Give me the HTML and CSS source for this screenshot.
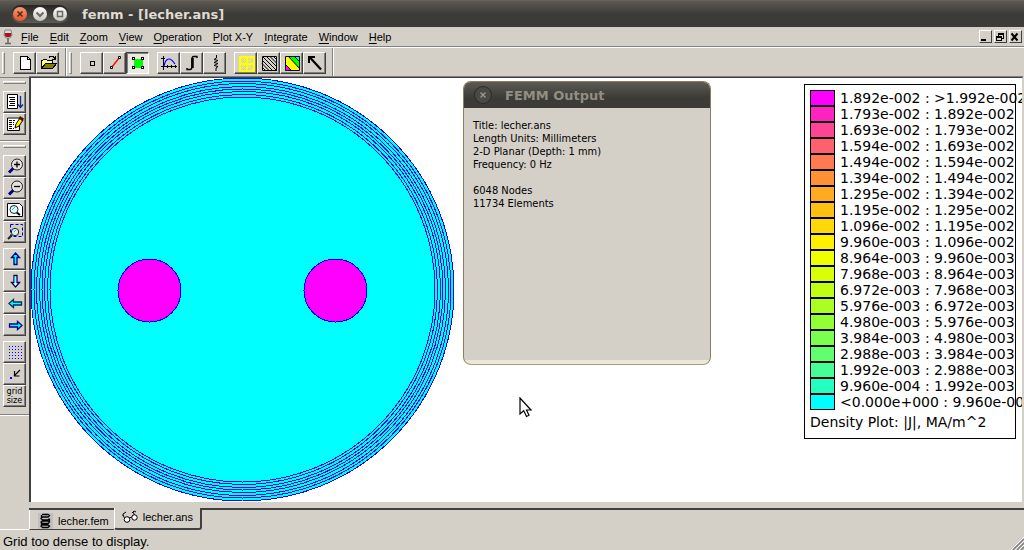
FILE: index.html
```html
<!DOCTYPE html>
<html lang="en">
<head>
<meta charset="utf-8">
<title>femm - [lecher.ans]</title>
<link rel="stylesheet" href="styles.css">
</head>
<body>
<header class="titlebar">
  <div class="window-buttons">
    <button class="orb orb-close" aria-label="Close"><svg width="14" height="14" viewBox="0 0 14 14"><path d="M4.5 4.5l5 5M9.5 4.5l-5 5" stroke="#5a2a18" stroke-width="1.6"/></svg></button>
    <button class="orb" aria-label="Minimize"><svg width="14" height="14" viewBox="0 0 14 14"><path d="M3.5 5.5L7 9l3.500-3.500" fill="none" stroke="#6a6862" stroke-width="2"/></svg></button>
    <button class="orb" aria-label="Maximize"><svg width="14" height="14" viewBox="0 0 14 14"><rect x="4.500" y="4.500" width="5" height="5" fill="none" stroke="#6a6862" stroke-width="1.500"/></svg></button>
  </div>
  <h1 class="title">femm - [lecher.ans]</h1>
</header>

<nav class="menubar">
  <svg class="glass" width="10" height="16" viewBox="0 0 10 16"><path d="M2 1h6l1 5-2 3H3L1 6z" fill="#d8d8d8" stroke="#888"/><path d="M2 4h6l.5 2L7 8H3L1.500 6z" fill="#b01020"/><path d="M5 9v5M2 14.500h6" stroke="#666" stroke-width="1.500"/></svg>
  <button class="menu"><u>F</u>ile</button>
  <button class="menu"><u>E</u>dit</button>
  <button class="menu"><u>Z</u>oom</button>
  <button class="menu"><u>V</u>iew</button>
  <button class="menu"><u>O</u>peration</button>
  <button class="menu"><u>P</u>lot X-Y</button>
  <button class="menu"><u>I</u>ntegrate</button>
  <button class="menu"><u>W</u>indow</button>
  <button class="menu"><u>H</u>elp</button>
  <div class="mdi-buttons">
    <button class="mdi" aria-label="Minimize document"><svg width="10" height="10" viewBox="0 0 10 10"><path d="M1 8h5" stroke="#000" stroke-width="2"/></svg></button>
    <button class="mdi" aria-label="Restore document"><svg width="10" height="10" viewBox="0 0 10 10" shape-rendering="crispEdges"><path d="M3 1h6v2H3zM1 4h6v2H1z" fill="#000"/><path d="M8.500 2v4.500H7M3.500 2v2M1.500 5v3.500h5V5" fill="none" stroke="#000"/></svg></button>
    <button class="mdi" aria-label="Close document"><svg width="10" height="10" viewBox="0 0 10 10"><path d="M1.500 1.500l6 7M7.500 1.500l-6 7" stroke="#000" stroke-width="2"/></svg></button>
  </div>
</nav>

<div class="toolbar">
  <div class="band">
    <span class="grip"></span>
    <div class="group">
      <button class="tool" aria-label="New"><svg width="18" height="18" viewBox="0 0 18 18" shape-rendering="crispEdges"><path d="M4.500 2.500h7l3 3v10h-10z" fill="#fff" stroke="#000"/><path d="M11.500 2.500v3h3" fill="none" stroke="#000"/></svg></button>
      <button class="tool" aria-label="Open"><svg width="18" height="18" viewBox="0 0 18 18" shape-rendering="crispEdges"><path d="M2.500 14V6.500h1l1-1h3l1 1h5V9" fill="#ffff80" stroke="#000"/><path d="M2.500 14.500l4-5h11l-4 5z" fill="#808000" stroke="#000"/><path d="M10 3.500l1-1h3l2 2M16.500 2v3.500H13" fill="none" stroke="#000"/></svg></button>
    </div>
  </div>
  <div class="band">
    <span class="grip"></span>
    <div class="group">
      <button class="tool" aria-label="Point mode"><svg width="18" height="18" viewBox="0 0 18 18"><rect x="7.500" y="7.500" width="4" height="4" fill="none" stroke="#000"/></svg></button>
      <button class="tool" aria-label="Contour mode"><svg width="18" height="18" viewBox="0 0 18 18"><path d="M6 13l7-9" stroke="#f00" stroke-width="1.300"/><path d="M4.500 12.500h2v2h-2zM12.500 2.500h2v2h-2z" fill="#fff" stroke="#000"/></svg></button>
      <button class="tool pressed" aria-label="Block mode" aria-pressed="true"><svg width="18" height="18" viewBox="0 0 18 18" shape-rendering="crispEdges"><path d="M5 5h9v9H5z" fill="#0f0"/><path d="M3.500 3.500h2v2h-2zM12.500 3.500h2v2h-2zM3.500 12.500h2v2h-2zM12.500 12.500h2v2h-2z" fill="#fff" stroke="#000"/></svg></button>
    </div>
    <div class="group">
      <button class="tool" aria-label="Plot"><svg width="18" height="18" viewBox="0 0 18 18"><path d="M3.500 2v14M1 12.500h16M1 4.500h4M7.500 11v3M11.500 11v3M15.500 11v3" stroke="#000" shape-rendering="crispEdges"/><path d="M4 12c1-5 3-7 5-7s4 2 6 5" fill="none" stroke="#00f" stroke-width="1.200"/></svg></button>
      <button class="tool" aria-label="Integrate"><svg width="18" height="18" viewBox="0 0 18 18"><path d="M14 4V2.500h-3.500c-1 0-1.500 1-1.500 3v7c0 2-1 3-2 3H4V14" fill="none" stroke="#000" stroke-width="1.400"/><path d="M9.500 4v10" stroke="#000" stroke-width="2.500"/></svg></button>
      <button class="tool" aria-label="Circuit"><svg width="18" height="18" viewBox="0 0 18 18"><path d="M10.500 1v3L8 5.500l4 1-4 2 4 1-4 2 4 1-2 1.500v3" fill="none" stroke="#000"/></svg></button>
    </div>
    <div class="group">
      <button class="tool" aria-label="Mesh"><svg width="18" height="18" viewBox="0 0 18 18" shape-rendering="crispEdges"><path d="M2.500 2.500h14v14h-14zM9.500 2v15M2 9.500h15" fill="none" stroke="#ff0" stroke-width="2"/><path d="M3 3l6 6M16 3l-6 6M3 16l6-6M16 16l-6-6M4 9l5-5M10 4l5 5M4 10l5 5M15 10l-5 5" stroke="#ff0"/></svg></button>
      <button class="tool" aria-label="Contour plot"><svg width="18" height="18" viewBox="0 0 18 18"><path d="M2.500 2.500h14v14h-14zM2 13l4 4M2 9.500l7 7M2 6l11 11M3 3l14 14M6 2l11 11M9.500 2l7 7M13 2l4 4" fill="none" stroke="#000"/></svg></button>
      <button class="tool" aria-label="Density plot"><svg width="18" height="18" viewBox="0 0 18 18"><path d="M2 2h15v15H2z" fill="#ff0"/><path d="M5 2h7l5 5v8z" fill="#0f0"/><path d="M11 2h6v6z" fill="#0ff"/><path d="M2 10l7 7H2z" fill="#f0f"/><path d="M5 2l12 13M2 10l7 7M11 2l6 6" stroke="#000"/><path d="M2.500 2.500h14v14h-14z" fill="none" stroke="#000"/></svg></button>
      <button class="tool" aria-label="Vector plot"><svg width="18" height="18" viewBox="0 0 18 18"><path d="M4 3.500l11 12" stroke="#000" stroke-width="2.200"/><path d="M3 9V3h6" fill="none" stroke="#000" stroke-width="2"/></svg></button>
    </div>
  </div>
</div>

<main class="workspace">
  <aside class="sidebar">
    <div class="side-band">
      <span class="side-grip"></span>
      <div class="stack">
        <button class="tool" aria-label="Output window"><svg width="18" height="18" viewBox="0 0 18 18"><path d="M1.500 1.500h10v14h-10z" fill="#fff" stroke="#000"/><path d="M3 4.500h6M4 6.500h5M3 8.500h6M4 10.500h5M3 12.500h6" stroke="#000"/><path d="M14.500 3v11M12 11.500l2.500 3 2.500-3" fill="none" stroke="#003090" stroke-width="1.300"/></svg></button>
        <button class="tool" aria-label="Edit notes"><svg width="18" height="18" viewBox="0 0 18 18"><path d="M1.500 2.500h11v13h-11z" fill="#fff"/><path d="M1.500 15.500V3h12v12.500z" fill="none" stroke="#000"/><path d="M3 5.500h6M3 7.500h5M3 9.500h5M3 11.500h4M3 13.500h5" stroke="#000" stroke-dasharray="3 1"/><path d="M9 13l1-4 4-6 3 2-4 6z" fill="#ff0" stroke="#000"/><path d="M13 3.500l1-2 3.500 2-1 2.500z" fill="#800000" stroke="#000" stroke-width=".5"/></svg></button>
      </div>
    </div>
    <div class="side-band zooms">
      <span class="side-grip"></span>
      <div class="stack">
        <button class="tool" aria-label="Zoom in"><svg width="18" height="18" viewBox="0 0 18 18"><path d="M3 15.500l5-5" stroke="#000080" stroke-width="3"/><circle cx="11" cy="7.500" r="5.500" fill="#e4e2de" stroke="#222"/><path d="M8 7.500h6M11 4.500v6" stroke="#000" stroke-width="1.300"/></svg></button>
        <button class="tool" aria-label="Zoom out"><svg width="18" height="18" viewBox="0 0 18 18"><path d="M3 15.500l5-5" stroke="#000080" stroke-width="3"/><circle cx="11" cy="7.500" r="5.500" fill="#e4e2de" stroke="#222"/><path d="M8 7.500h6" stroke="#000" stroke-width="1.300"/></svg></button>
        <button class="tool" aria-label="Zoom to page"><svg width="18" height="18" viewBox="0 0 18 18"><path d="M1.500 2.500h12l3 3v10h-15z" fill="#fff" stroke="#000"/><path d="M10 11l4 3" stroke="#000" stroke-width="2"/><circle cx="8" cy="8.500" r="4" fill="#dff" stroke="#222"/><path d="M6 9l3-3" stroke="#0cc"/></svg></button>
        <button class="tool" aria-label="Zoom window"><svg width="18" height="18" viewBox="0 0 18 18"><path d="M4.500 1.500h12v12h-12z" fill="none" stroke="#0000a0" stroke-dasharray="3 2"/><path d="M2 16l4-4" stroke="#222" stroke-width="2"/><circle cx="9" cy="9" r="3.700" fill="#dee" stroke="#222"/><path d="M8 9l2-2" stroke="#0cc"/></svg></button>
      </div>
      <div class="stack">
        <button class="tool" aria-label="Pan up"><svg width="18" height="18" viewBox="0 0 18 18"><path d="M9.500 3l4 4.500h-2.500v7H8v-7H5.500z" fill="#0ff" stroke="#000080" stroke-width="1.300"/></svg></button>
        <button class="tool" aria-label="Pan down"><svg width="18" height="18" viewBox="0 0 18 18"><path d="M9.500 15l4-4.500h-2.500v-7H8v7H5.500z" fill="#fff" stroke="#000060" stroke-width="1.300"/><path d="M9 4v7" stroke="#0ff"/></svg></button>
        <button class="tool" aria-label="Pan left"><svg width="18" height="18" viewBox="0 0 18 18"><path d="M3 9.500l4.500-4v2.500h8v3h-8v2.500z" fill="#0ff" stroke="#003060" stroke-width="1.300"/></svg></button>
        <button class="tool" aria-label="Pan right"><svg width="18" height="18" viewBox="0 0 18 18"><path d="M16 9.500l-4.500-4v2.500h-8v3h8v2.500z" fill="#0ff" stroke="#000090" stroke-width="1.300"/></svg></button>
      </div>
      <div class="stack">
        <button class="tool" aria-label="Show grid"><svg width="18" height="18" viewBox="0 0 18 18" shape-rendering="crispEdges"><path d="M3 3.500h13M3 6.500h13M3 9.500h13M3 12.500h13M3 15.500h13" stroke="#00f" stroke-dasharray="1 2"/></svg></button>
        <button class="tool" aria-label="Snap to grid"><svg width="18" height="18" viewBox="0 0 18 18"><path d="M14 5l-6 6M8.500 6v5h5" fill="none" stroke="#000" stroke-width="1.200"/><path d="M4 12h2v2H4z" fill="#00f"/></svg></button>
        <button class="tool grid-size">grid<br>size</button>
      </div>
    </div>
  </aside>

  <div class="document">
    <div class="canvas">
      <svg class="geometry" width="424" height="424" viewBox="0 0 424 424" shape-rendering="crispEdges">
        <g fill="#0ff" stroke="#00f">
          <circle cx="211.500" cy="211.500" r="211.500"/>
          <circle cx="211.500" cy="211.500" r="208.500"/>
          <circle cx="211.500" cy="211.500" r="206"/>
          <circle cx="211.500" cy="211.500" r="203"/>
          <circle cx="211.500" cy="211.500" r="200.500"/>
          <circle cx="211.500" cy="211.500" r="198"/>
          <circle cx="211.500" cy="211.500" r="195"/>
          <circle cx="211.500" cy="211.500" r="192.500"/>
        </g>
        <g fill="#f0f" stroke="#00f">
          <circle cx="118.500" cy="212.500" r="31.500"/>
          <circle cx="304.500" cy="212.500" r="31.500"/>
        </g>
      </svg>

      <section class="output">
        <header class="output-title">
          <button class="output-close" aria-label="Close output"><svg width="16" height="16" viewBox="0 0 16 16"><path d="M5.500 5.500l5 5M10.500 5.500l-5 5" stroke="#a09c90" stroke-width="1.200"/></svg></button>
          <h2 class="title">FEMM Output</h2>
        </header>
        <div class="output-text">
          <p>Title: lecher.ans<br>Length Units: Millimeters<br>2-D Planar (Depth: 1 mm)<br>Frequency: 0 Hz</p>
          <p>6048 Nodes<br>11734 Elements</p>
        </div>
      </section>

      <section class="legend">
        <ul class="scale">
          <li><i style="background:#ff00ff"></i>1.892e-002 : &gt;1.992e-002</li>
          <li><i style="background:#ff24c2"></i>1.793e-002 : 1.892e-002</li>
          <li><i style="background:#ff4495"></i>1.693e-002 : 1.793e-002</li>
          <li><i style="background:#ff606e"></i>1.594e-002 : 1.693e-002</li>
          <li><i style="background:#ff7a4e"></i>1.494e-002 : 1.594e-002</li>
          <li><i style="background:#ff9234"></i>1.394e-002 : 1.494e-002</li>
          <li><i style="background:#ffaa20"></i>1.295e-002 : 1.394e-002</li>
          <li><i style="background:#ffc012"></i>1.195e-002 : 1.295e-002</li>
          <li><i style="background:#ffd808"></i>1.096e-002 : 1.195e-002</li>
          <li><i style="background:#fff000"></i>9.960e-003 : 1.096e-002</li>
          <li><i style="background:#f0ff00"></i>8.964e-003 : 9.960e-003</li>
          <li><i style="background:#d8ff08"></i>7.968e-003 : 8.964e-003</li>
          <li><i style="background:#c0ff12"></i>6.972e-003 : 7.968e-003</li>
          <li><i style="background:#aaff20"></i>5.976e-003 : 6.972e-003</li>
          <li><i style="background:#92ff34"></i>4.980e-003 : 5.976e-003</li>
          <li><i style="background:#7aff4e"></i>3.984e-003 : 4.980e-003</li>
          <li><i style="background:#60ff6e"></i>2.988e-003 : 3.984e-003</li>
          <li><i style="background:#44ff95"></i>1.992e-003 : 2.988e-003</li>
          <li><i style="background:#24ffc2"></i>9.960e-004 : 1.992e-003</li>
          <li><i style="background:#00ffff"></i>&lt;0.000e+000 : 9.960e-004</li>
        </ul>
        <p class="caption">Density Plot: |J|, MA/m^2</p>
      </section>

      <svg class="pointer" width="14" height="21" viewBox="0 0 14 21"><path d="M1 1v16l3.700-3.300L7.500 19.500l2.500-1.200-2.500-5.300H12z" fill="#fff" stroke="#000" stroke-width="1.200"/></svg>
    </div>

    <div class="tabs">
      <button class="tab"><svg width="15" height="16" viewBox="0 0 15 16"><path d="M0 0h15v16H0z" fill="#c0c0c0"/><path d="M4 1.500h6l1.500 1-1.500 1.500H4.500L3 5.500 4.500 7H10l1.500-1.500M3 9l1.500 1.500H10L11.500 9 10 8H4.500zM3 13l1.500 1.500H10l1.500-1.500-1.500-1H4.500zM3.500 2v3M11.500 6v3M3.500 9v4" fill="none" stroke="#000" stroke-width="1.300"/></svg>lecher.fem</button>
      <button class="tab current"><svg width="16" height="14" viewBox="0 0 16 14"><path d="M1 6V4l3-2M10 3l2-2 2 1M7 8l3-1M1 5l2 4M11 2l2 4" fill="none" stroke="#000"/><circle cx="5" cy="9.500" r="2.800" fill="#fff" stroke="#000"/><circle cx="12.500" cy="7.500" r="2.700" fill="#fff" stroke="#000"/></svg>lecher.ans</button>
    </div>
  </div>
</main>

<footer class="status">
  <span>Grid too dense to display.</span>
  <svg class="resize" width="13" height="13" viewBox="0 0 13 13"><path d="M0 13L13 0M4 13l9-9M8 13l5-5" stroke="#fff"/><path d="M2 13L13 2M6 13l7-7M10 13l3-3" stroke="#808080" stroke-width="1.500"/></svg>
</footer>
</body>
</html>
```
FILE: styles.css
```css
* {
  box-sizing: border-box;
}

body {
  display: flex;
  flex-direction: column;
  height: 100vh;
  margin: 0;
  overflow: hidden;
  background: #d4d0c8;
  color: #000;
  font: 11px "Liberation Sans", Arial, sans-serif;
}

button {
  margin: 0;
  padding: 0;
  border: 0;
  background: none;
  color: inherit;
  font: inherit;
}

svg {
  display: block;
  flex: none;
}

p {
  margin: 0;
}

.titlebar {
  display: flex;
  align-items: center;
  gap: 13px;
  height: 27px;
  padding-left: 11px;
  border-top: 1px solid #6b6150;
  background: linear-gradient(#5c5a54, #3c3b37 50%);
}

.window-buttons {
  display: flex;
  align-items: center;
  gap: 6px;
  height: 18px;
  padding: 0 2px;
  border-radius: 9px;
  background: linear-gradient(#25241f, #5c5a54);
}

.orb {
  border-radius: 50%;
  background: linear-gradient(#fff, #c8c4bc);
}

.orb-close {
  background: linear-gradient(#f79a78, #e5562a);
}

.title {
  margin: 0;
  color: #dfdbd2;
  font: bold 13px "DejaVu Sans", sans-serif;
}

.menubar {
  display: flex;
  align-items: center;
  gap: 11px;
  height: 20px;
  padding: 0 2px 0 3px;
  border-bottom: 1px solid #808080;
}

.glass {
  margin-right: -3px;
}

.menu u {
  text-underline-offset: 2px;
}

.mdi-buttons {
  display: flex;
  gap: 2px;
  margin-left: auto;
}

.mdi {
  width: 13px;
  height: 13px;
  border: 1px solid;
  border-color: #fff #404040 #404040 #fff;
}

.toolbar {
  display: flex;
  height: 30px;
  border-top: 1px solid #fff;
}

.band {
  display: flex;
  align-items: center;
  gap: 8px;
  padding: 0 6px 0 2px;
  border-right: 1px solid #808080;
  box-shadow: 1px 0 #fff;
}

.band + .band {
  padding-left: 3px;
}

.grip {
  width: 3px;
  height: 22px;
  border: 1px solid;
  border-color: #fff #808080 #808080 #fff;
}

.group {
  display: flex;
}

.tool {
  display: flex;
  align-items: center;
  justify-content: center;
  width: 23px;
  height: 22px;
  border: 1px solid;
  border-color: #fff #404040 #404040 #fff;
  box-shadow: inset -1px -1px #808080;
}

.pressed {
  border-color: #404040 #fff #fff #404040;
  background: #eae8e4;
  box-shadow: inset 1px 1px #808080;
}

.workspace {
  display: flex;
  flex: 1;
  min-height: 0;
}

.sidebar {
  width: 29px;
  border-top: 1px solid #808080;
  border-bottom: 1px solid #fff;
}

.side-band {
  padding: 3px 3px 5px;
  border-bottom: 1px solid #808080;
  box-shadow: 0 1px #fff;
}

.zooms {
  padding-top: 4px;
  padding-bottom: 7px;
}

.side-grip {
  display: block;
  height: 3px;
  margin-bottom: 7px;
  border: 1px solid;
  border-color: #fff #808080 #808080 #fff;
}

.stack + .stack {
  margin-top: 5px;
}

.grid-size {
  font: 9px/9px "DejaVu Sans Condensed", "DejaVu Sans", sans-serif;
}

.document {
  display: flex;
  flex: 1;
  flex-direction: column;
  min-width: 0;
}

.canvas {
  position: relative;
  flex: 1;
  min-height: 0;
  overflow: hidden;
  margin-right: 1px;
  border-top: 1px solid #404040;
  border-left: 2px solid #404040;
  border-right: 1px solid #d4d0c8;
  background: #fff;
  box-shadow: 0 -1px #808080;
}

.geometry {
  overflow: visible;
}

.output {
  position: absolute;
  top: 3px;
  left: 432px;
  width: 248px;
  height: 284px;
  overflow: hidden;
  border: 1px solid #8b7d62;
  border-bottom-color: #a89a78;
  border-radius: 8px;
  background: linear-gradient(#ece6dc, #ece6dc) bottom / 100% 4px no-repeat #d4d0c8;
}

.output-title {
  display: flex;
  align-items: center;
  gap: 14px;
  height: 26px;
  padding-left: 11px;
  background: linear-gradient(#5c5a54, #3c3b37 60%);
}

.output-title .title {
  color: #918e82;
}

.output-close {
  border-radius: 50%;
  background: #4a4944;
  box-shadow: 0 0 0 1px #2c2b28;
}

.output-text {
  display: grid;
  gap: 13px;
  padding: 11px 9px;
  font: 11px/13px "DejaVu Sans Condensed", "DejaVu Sans", sans-serif;
}

.legend {
  position: absolute;
  top: 6px;
  right: 6px;
  width: 212px;
  padding: 5px;
  border: 1px solid #000;
  font: 14px/16px "DejaVu Sans", sans-serif;
  white-space: nowrap;
}

.scale {
  margin: 0;
  padding: 0;
  list-style: none;
}

.scale li {
  display: flex;
  gap: 5px;
}

.scale i {
  flex: none;
  width: 25px;
  height: 16px;
  border: 1px solid #000;
}

.caption {
  padding: 4px 0 3px;
}

.pointer {
  position: absolute;
  top: 319px;
  left: 488px;
}

.tabs {
  display: flex;
  align-items: flex-start;
  height: 28px;
  padding-top: 6px;
  background: linear-gradient(#404040, #404040) 0 6px / 100% 2px no-repeat;
}

.tab {
  display: flex;
  align-items: center;
  gap: 5px;
  height: 20px;
  margin-top: 2px;
  padding: 2px 5px 0 8px;
  border-bottom: 1px solid #404040;
  border-left: 1px solid #fff;
}

.current {
  height: 22px;
  margin-top: 0;
  padding: 0 7px 2px;
  border-right: 2px solid #404040;
  border-bottom-width: 2px;
  border-radius: 0 0 3px 3px;
  background: #d4d0c8;
}

.status {
  display: flex;
  align-items: flex-end;
  justify-content: space-between;
  height: 20px;
  padding-left: 3px;
  font-size: 13px;
  line-height: 16px;
}
```
